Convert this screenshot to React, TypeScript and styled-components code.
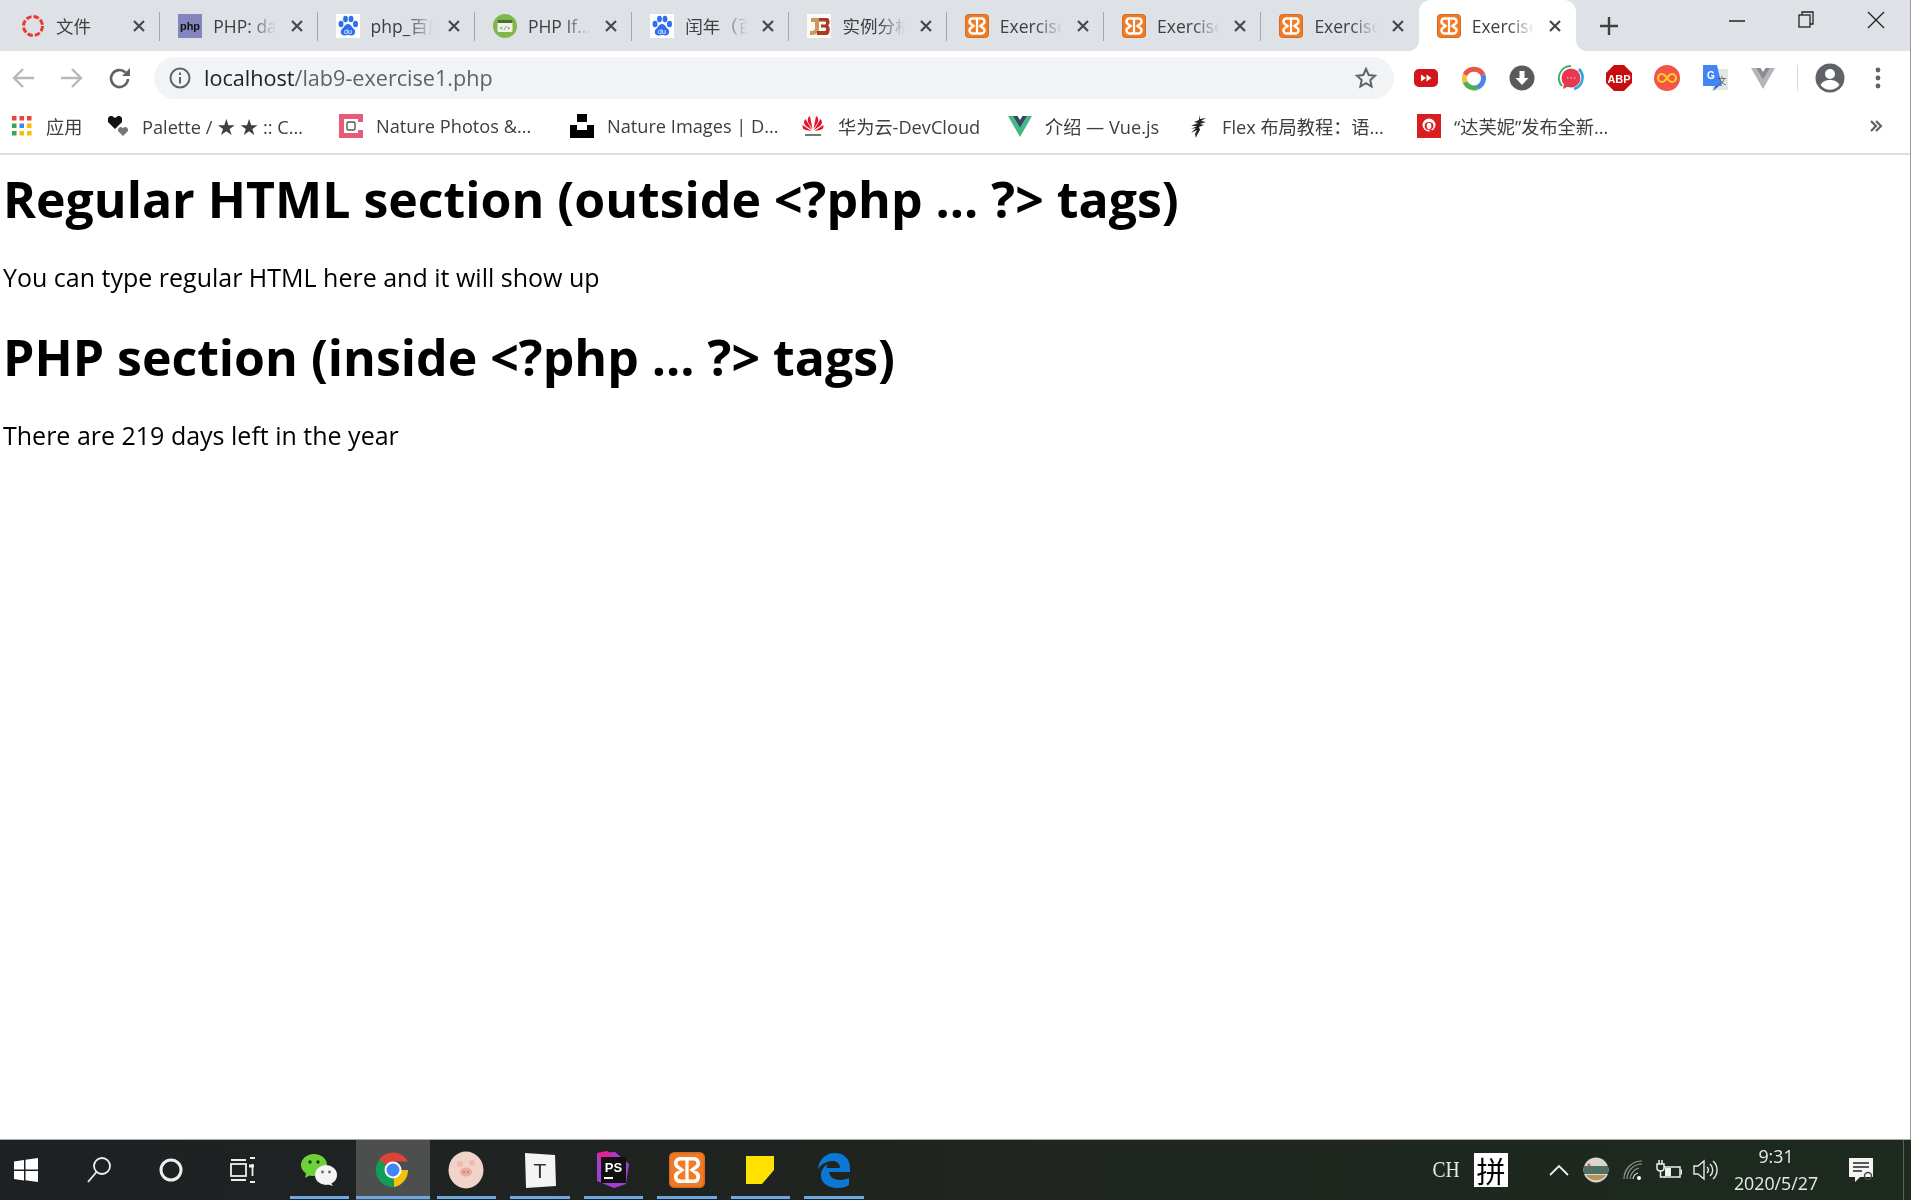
import React from "react";
import styled, { createGlobalStyle } from "styled-components";

const GlobalStyle = createGlobalStyle`
  html, body {
    margin: 0;
    padding: 0;
    background: #fff;
    overflow: hidden;
  }
  * { box-sizing: border-box; }
`;

const UI_FONT = `"Open Sans", "Noto Sans", "Noto Sans CJK SC", sans-serif`;

const Screen = styled.div`
  width: 1911px;
  height: 1200px;
  display: flex;
  flex-direction: column;
  font-family: ${UI_FONT};
  overflow: hidden;
  background: #fff;
  filter: blur(0.35px);
`;

const BrowserWindow = styled.div`
  flex: 1;
  min-height: 0;
  display: flex;
  flex-direction: column;
  border-right: 1px solid #9c9c9c;
`;

const TabStrip = styled.div`
  height: 51px;
  flex: none;
  display: flex;
  align-items: stretch;
  padding-left: 3px;
  background: #dee1e6;
`;

const Tab = styled.div<{ $active?: boolean; $noSep?: boolean }>`
  width: 157.3px;
  flex: none;
  position: relative;
  display: flex;
  align-items: center;
  padding: 0 14px 0 18px;
  gap: 11px;
  border-radius: 12px 12px 0 0;
  background: ${(p) => (p.$active ? "#fff" : "transparent")};

  &::after {
    content: "";
    display: ${(p) => (p.$noSep || p.$active ? "none" : "block")};
    position: absolute;
    right: 0;
    top: 12px;
    height: 29px;
    width: 1px;
    background: #a4a7ab;
  }
  &::before {
    content: "";
    display: ${(p) => (p.$active ? "block" : "none")};
    position: absolute;
    left: -10px;
    right: -10px;
    bottom: 0;
    height: 10px;
    z-index: 0;
    background:
      radial-gradient(circle at 0 0, #dee1e6 9.5px, #fff 10px) left bottom / 10px 10px no-repeat,
      radial-gradient(circle at 100% 0, #dee1e6 9.5px, #fff 10px) right bottom / 10px 10px no-repeat;
  }
  & > * { position: relative; z-index: 1; }
`;

const TabTitle = styled.span`
  flex: 1;
  min-width: 0;
  white-space: nowrap;
  overflow: hidden;
  font-size: 17.5px;
  color: #3c4043;
  mask-image: linear-gradient(90deg, #000 55%, transparent 96%);
`;

const TabClose = styled.svg`
  flex: none;
  width: 14px;
  height: 14px;
`;

const NewTab = styled.svg`
  flex: none;
  width: 20px;
  height: 20px;
  margin: 0 0 0 23px;
  align-self: center;
`;

const WindowControls = styled.div`
  margin-left: auto;
  display: flex;
  align-items: flex-start;
  padding: 9px 25px 0 0;
  gap: 53px;
`;

const ToolBar = styled.div`
  height: 53px;
  flex: none;
  display: flex;
  align-items: center;
  padding: 0 0 0 12px;
`;

const NavButton = styled.div<{ $width: number }>`
  width: ${(p) => p.$width}px;
  flex: none;
  display: flex;
  align-items: center;
`;

const AddressBar = styled.div`
  width: 1240px;
  height: 42px;
  flex: none;
  display: flex;
  align-items: center;
  margin-left: 1px;
  padding: 0 16px 0 15px;
  border-radius: 21px;
  background: #f1f3f4;
`;

const Url = styled.div`
  flex: 1;
  margin-left: 13px;
  font-size: 21.6px;
  color: #5f6368;
  white-space: nowrap;
  b {
    font-weight: 400;
    color: #202124;
  }
`;

const Extensions = styled.div`
  display: flex;
  align-items: center;
  margin-left: 8px;
`;

const ExtSlot = styled.div<{ $width?: number }>`
  width: ${(p) => p.$width ?? 48.2}px;
  flex: none;
  display: flex;
  justify-content: center;
  align-items: center;
`;

const ToolDivider = styled.div`
  width: 1px;
  height: 26px;
  flex: none;
  margin: 0 0 0 9px;
  background: #d7d9dc;
`;

const BookmarkBar = styled.div`
  height: 51px;
  flex: none;
  display: flex;
  align-items: center;
  padding: 0 27px 5px 11px;
  border-bottom: 2px solid #dcdde1;
`;

const Bookmark = styled.div<{ $width: number }>`
  width: ${(p) => p.$width}px;
  flex: none;
  display: flex;
  align-items: center;
  gap: 13px;
  font-size: 18.2px;
  color: #3c4043;
  white-space: nowrap;
`;

const BookmarkMore = styled.svg`
  margin-left: auto;
  width: 14px;
  height: 14px;
`;

const Page = styled.main`
  flex: 1;
  min-height: 0;
  padding: 0 0 0 3px;
  color: #000;
`;

const Heading = styled.h1`
  margin: 0;
  font-size: 50px;
  line-height: 60px;
  font-weight: 700;
  white-space: nowrap;
`;

const FirstHeading = styled(Heading)`
  margin-top: 14px;
`;

const Lead = styled.p`
  margin: 32px 0 34px;
  font-size: 25px;
  line-height: 32px;
  white-space: nowrap;
`;

const Taskbar = styled.footer`
  height: 61px;
  flex: none;
  display: flex;
  align-items: stretch;
  border-top: 1px solid #a8a8a8;
  background: linear-gradient(90deg, #1d2124 0%, #20241f 45%, #1d2a1f 100%);
  color: #eef0ee;
`;

const StartButton = styled.div`
  width: 63px;
  flex: none;
  display: flex;
  align-items: center;
  padding-left: 13px;
`;

const SystemButton = styled.div`
  width: 72px;
  flex: none;
  display: flex;
  align-items: center;
  justify-content: center;
`;

const AppButtons = styled.div`
  display: flex;
  align-items: stretch;
  margin-left: 3.5px;
`;

const AppButton = styled.div<{ $active?: boolean }>`
  width: 73.5px;
  flex: none;
  display: flex;
  align-items: center;
  justify-content: center;
  position: relative;
  background: ${(p) => (p.$active ? "#4c4f4d" : "transparent")};

  &::after {
    content: "";
    position: absolute;
    left: ${(p) => (p.$active ? "0" : "7px")};
    right: ${(p) => (p.$active ? "0" : "7px")};
    bottom: 1px;
    height: 3px;
    background: #6aa9e4;
  }
`;

const Tray = styled.div`
  margin-left: auto;
  display: flex;
  align-items: center;
  padding-right: 7px;
`;

const ImeLang = styled.span`
  width: 32px;
  margin-right: 12px;
  text-align: center;
  font-family: "Liberation Serif", serif;
  font-size: 23px;
  transform: scaleX(0.85);
  color: #e8e8e2;
`;

const ImeMode = styled.span`
  width: 34px;
  height: 34px;
  margin-right: 33px;
  display: flex;
  align-items: center;
  justify-content: center;
  background: #fff;
  color: #000;
  font-family: "Noto Sans CJK SC", sans-serif;
  font-size: 29px;
  line-height: 34px;
`;

const TrayIcon = styled.div<{ $width: number }>`
  width: ${(p) => p.$width}px;
  flex: none;
  display: flex;
  align-items: center;
  justify-content: center;
`;

const Clock = styled.div`
  width: 100px;
  margin-right: 12px;
  text-align: center;
  font-size: 17.8px;
  line-height: 27px;
  color: #e9ebe9;
`;

const ShowDesktop = styled.div`
  width: 1px;
  align-self: stretch;
  margin-left: 19px;
  background: #596059;
`;

/* favicons */

const Ring = () => (
  <svg width="24" height="24" viewBox="0 0 24 24">
    <circle cx="12" cy="12" r="9.5" fill="none" stroke="#ea3a2e" strokeWidth="3" strokeDasharray="5.5 2" />
  </svg>
);

const PhpIcon = () => (
  <svg width="24" height="24" viewBox="0 0 24 24">
    <rect width="24" height="24" fill="#8585bd" />
    <text x="12" y="16" textAnchor="middle" fontFamily="Liberation Sans, sans-serif" fontWeight="700" fontSize="11" fill="#111">php</text>
  </svg>
);

const Paw = () => (
  <svg width="24" height="24" viewBox="0 0 24 24">
    <rect width="24" height="24" fill="#fff" />
    <g fill="#2f6fee">
      <ellipse cx="5" cy="10" rx="2.5" ry="3.2" />
      <ellipse cx="9.5" cy="5" rx="2.4" ry="3.2" />
      <ellipse cx="15" cy="5" rx="2.4" ry="3.2" />
      <ellipse cx="19.5" cy="10" rx="2.5" ry="3.2" />
      <path d="M12 10c3 0 3.5 3 6 5 2.5 2.400 1 7-3 6.500-1.500-.2-2-.5-3-.5s-1.500.3-3 .5c-4 .5-5.500-4-3-6.500 2.500-2 3-5 6-5z" />
    </g>
    <text x="12" y="20" textAnchor="middle" fontFamily="Liberation Sans, sans-serif" fontSize="7" fill="#fff">du</text>
  </svg>
);

const GreenCode = () => (
  <svg width="24" height="24" viewBox="0 0 24 24">
    <circle cx="12" cy="12" r="12" fill="#7fb84a" />
    <rect x="4.500" y="6" width="15" height="12" rx="1.500" fill="#eef3e6" />
    <rect x="4.500" y="6" width="15" height="3" fill="#4f6a3a" />
    <text x="12" y="16" textAnchor="middle" fontFamily="Liberation Mono, monospace" fontSize="6" fill="#44543a">{"</>"}</text>
  </svg>
);

const JbIcon = () => (
  <svg width="24" height="24" viewBox="0 0 24 24">
    <rect width="24" height="24" fill="#fdfaf6" />
    <path d="M4 4h8v11c0 4-3 6-9 6v-4c3 0 5-.5 5-2.500V8H4z" fill="#c79a5e" />
    <path d="M12 4h8c3 0 3.500 6 1 7.500 3 1.500 2 9.500-1.500 9.500H10v-4h8c1.500 0 1.500-3.500 0-3.500h-4v-3h4c1.500 0 1.500-3 0-3h-6z" fill="#a83a26" />
  </svg>
);

const Xampp = ({ size = 24 }: { size?: number }) => (
  <svg width={size} height={size} viewBox="0 0 24 24">
    <rect x=".5" y=".5" width="23" height="23" rx="3" fill="#f27a22" stroke="#d26a28" />
    <path
      d="M7.500 4.500h9a3 3 0 0 1 1.500 5.600L15.500 12l2.500 1.900a3 3 0 0 1-1.500 5.600h-9A3 3 0 0 1 6 13.900L8.500 12 6 10.100A3 3 0 0 1 7.500 4.500z"
      fill="none"
      stroke="#fff"
      strokeWidth="2.400"
    />
    <path d="M12 5v14" stroke="#fff" strokeWidth="2.200" />
  </svg>
);

/* bookmarks */

const AppsGrid = () => {
  const colors = ["#ea4335", "#ea4335", "#ea4335", "#34a853", "#4285f4", "#fbbc05", "#34a853", "#fbbc05", "#fbbc05"];
  return (
    <svg width="22" height="22" viewBox="0 0 22 22">
      {colors.map((c, i) => (
        <rect key={i} x={1 + (i % 3) * 7.500} y={1 + Math.floor(i / 3) * 7.500} width="4.500" height="4.500" fill={c} />
      ))}
    </svg>
  );
};

const Hearts = () => (
  <svg width="22" height="22" viewBox="0 0 22 22">
    <path d="M8 14 1 7V3l2-2h2l3 2 3-2h2l2 2v4z" fill="#111" />
    <path d="M16 21l-5-5v-2l2-2h1l2 1 2-1h1l2 2v2z" fill="#777" />
  </svg>
);

const NatureIcon = () => (
  <svg width="24" height="24" viewBox="0 0 24 24">
    <path d="M0 0h24v8h-5V5H5v14h14v-3h5v8H0z" fill="#e85a75" />
    <rect x="8" y="8" width="8" height="8" rx="1.500" fill="none" stroke="#555" strokeWidth="1.400" />
  </svg>
);

const UnsplashIcon = () => (
  <svg width="24" height="26" viewBox="0 0 24 26">
    <path d="M7 1h10v8H7zM0 12h7v5h10v-5h7v13H0z" fill="#000" />
  </svg>
);

const HuaweiIcon = () => (
  <svg width="24" height="24" viewBox="0 0 24 24">
    <g fill="#e3152a">
      <path d="M11.500 15 9 2c-2 1-3 4-1.500 7z" />
      <path d="M12.500 15 15 2c2 1 3 4 1.500 7z" />
      <path d="M11 16 4.500 5C2.500 7 2.500 10 5 12z" />
      <path d="M13 16l6.500-11c2 2 2 5-.5 7z" />
      <path d="M10.500 17 1.500 11c-.5 2.500 1 4.500 3 5z" />
      <path d="M13.500 17l9-6c.5 2.500-1 4.500-3 5z" />
    </g>
    <rect x="4" y="20" width="16" height="2" fill="#777" />
  </svg>
);

const VueIcon = ({ faded }: { faded?: boolean }) => (
  <svg width="24" height="22" viewBox="0 0 24 22">
    <path d="M0 1h5l7 12L19 1h5L12 22z" fill={faded ? "#b3b5b8" : "#42b883"} />
    <path d="M5 1h4.500L12 5l2.500-4H19l-7 12z" fill={faded ? "#8a8c90" : "#35495e"} />
  </svg>
);

const Brush = () => (
  <svg width="22" height="24" viewBox="0 0 22 24">
    <path
      d="M12 1l1 4 6-1-5 3 5 1-6 2 4 1-5 2 1 3-3 5-1 3-1-4 2-4-6 3 5-5-5 1 6-3-6 0 7-3-4-1 5-2z"
      fill="#222"
    />
  </svg>
);

const QIcon = () => (
  <svg width="24" height="24" viewBox="0 0 24 24">
    <rect width="24" height="24" fill="#d81e1e" />
    <circle cx="12" cy="11" r="6.500" fill="#fff" />
    <text x="12" y="16" textAnchor="middle" fontFamily="Liberation Serif, serif" fontWeight="700" fontSize="13" fill="#d81e1e">Q</text>
  </svg>
);

/* extensions */

const YoutubeFast = () => (
  <svg width="26" height="22" viewBox="0 0 26 22">
    <rect x="1" y="2" width="24" height="18" rx="5" fill="#d3161b" />
    <path d="M8 7.500l5 3.500-5 3.500zM13.500 7.500l5 3.500-5 3.500z" fill="#fff" />
  </svg>
);

const ChromeRing = () => (
  <svg width="26" height="26" viewBox="0 0 26 26" fill="none" strokeWidth="5">
    <path d="M4 10A10 10 0 0 1 22 10" stroke="#e8554a" />
    <path d="M22 10a10 10 0 0 1-6 12.500" stroke="#4a86e8" />
    <path d="M16 22.500A10 10 0 0 1 4 17" stroke="#4caf50" />
    <path d="M4 17a10 10 0 0 1 0-7" stroke="#fbc02d" />
  </svg>
);

const DownloadDisc = () => (
  <svg width="26" height="26" viewBox="0 0 26 26">
    <circle cx="13" cy="13" r="12.500" fill="#5a5a5a" />
    <path d="M10.500 6h5v7h4L13 20l-6.500-7h4z" fill="#fff" />
  </svg>
);

const ChatDisc = () => (
  <svg width="26" height="26" viewBox="0 0 26 26">
    <path d="M13 1a12 12 0 0 0-9 20" fill="none" stroke="#3bb273" strokeWidth="2" />
    <path d="M16 24a12 12 0 0 0 5-20" fill="none" stroke="#2aa5e0" strokeWidth="2.500" />
    <circle cx="13" cy="13" r="9.500" fill="#e8384f" />
    <path d="M6 19l-1 5 6-3z" fill="#e8384f" />
    <path d="M9 13h1.500M12.500 13H14M16 13h1.500" stroke="#ffd0d6" strokeWidth="1.200" />
  </svg>
);

const AbpSign = () => (
  <svg width="26" height="26" viewBox="0 0 26 26">
    <path d="M8 0h10l8 8v10l-8 8H8l-8-8V8z" fill="#c70d0d" />
    <text x="13" y="17.500" textAnchor="middle" fontFamily="Liberation Sans, sans-serif" fontWeight="700" fontSize="11" fill="#fff">ABP</text>
  </svg>
);

const Infinity8 = () => (
  <svg width="26" height="26" viewBox="0 0 26 26">
    <circle cx="13" cy="13" r="13" fill="#f4544c" />
    <path d="M13 13c-2-3-3-4-5-4a4 4 0 0 0 0 8c2 0 3-1 5-4s3-4 5-4a4 4 0 0 1 0 8c-2 0-3-1-5-4z" fill="none" stroke="#ffd11a" strokeWidth="2.200" />
  </svg>
);

const TranslateIcon = () => (
  <svg width="26" height="28" viewBox="0 0 26 28">
    <rect x="10" y="5" width="16" height="21" fill="#e4e6e4" />
    <path d="M1 1h14l5 21H1z" fill="#4285f4" />
    <path d="M13 22l-2 5 6-5z" fill="#3367c4" />
    <text x="9" y="15" textAnchor="middle" fontFamily="Liberation Sans, sans-serif" fontWeight="700" fontSize="10" fill="#fff">G</text>
    <text x="20" y="20" textAnchor="middle" fontFamily="Noto Sans CJK SC, sans-serif" fontSize="9" fill="#555">文</text>
  </svg>
);

const ProfileIcon = () => (
  <svg width="30" height="30" viewBox="0 0 30 30">
    <circle cx="15" cy="15" r="14.500" fill="#5f6368" />
    <circle cx="15" cy="11" r="5" fill="#fff" />
    <path d="M5.500 22c2-4 6-5 9.500-5s7.500 1 9.500 5a12 12 0 0 1-19 0z" fill="#fff" />
  </svg>
);

/* taskbar */

const WinLogo = () => (
  <svg width="26" height="26" viewBox="0 0 26 26" fill="#fff">
    <path d="M1 4.500l10-1.500v9.500H1zM12.500 2.800L25 1v11.500H12.500zM1 14h10v9.500L1 22zM12.500 14H25v11l-12.500-1.800z" />
  </svg>
);

const SearchGlass = () => (
  <svg width="26" height="28" viewBox="0 0 26 28" fill="none" stroke="#eee" strokeWidth="1.800">
    <circle cx="16" cy="10" r="8" />
    <path d="M10.500 16L2 26" />
  </svg>
);

const Cortana = () => (
  <svg width="26" height="26" viewBox="0 0 26 26">
    <circle cx="13" cy="13" r="10" fill="none" stroke="#eee" strokeWidth="3" />
  </svg>
);

const TaskView = () => (
  <svg width="26" height="26" viewBox="0 0 26 26" fill="none" stroke="#eee" strokeWidth="1.800">
    <rect x="1" y="7" width="15" height="12" />
    <path d="M1 3h15M1 23h15M20 1h5M20 25h5M22.500 7v12" />
    <path d="M19 9h5" strokeWidth="3" />
  </svg>
);

const WeChat = () => (
  <svg width="38" height="34" viewBox="0 0 38 34">
    <path d="M14 1c7.500 0 13 5 13 11s-5.500 11-13 11c-1.500 0-3-.2-4.300-.6L5 25l1-4.500C3 18.500 1 15.500 1 12 1 6 6.500 1 14 1z" fill="#6fd13a" />
    <ellipse cx="26" cy="22" rx="11" ry="10" fill="#f4f4f4" />
    <path d="M31 30l2 3-6-2z" fill="#f4f4f4" />
    <circle cx="10" cy="9" r="1.700" fill="#1c3a10" />
    <circle cx="18" cy="9" r="1.700" fill="#1c3a10" />
    <circle cx="22.500" cy="19" r="1.400" fill="#666" />
    <circle cx="29.500" cy="19" r="1.400" fill="#666" />
  </svg>
);

const ChromeLogo = () => (
  <svg width="36" height="36" viewBox="0 0 36 36">
    <path d="M18 18L4 8A17 17 0 0 1 33 9.500H18z" fill="#db4437" />
    <path d="M18 18h15a17 17 0 0 1-14 17z" fill="#f4c20d" />
    <path d="M18 18L19 35A17 17 0 0 1 4 8z" fill="#0f9d58" />
    <circle cx="18" cy="18" r="8.500" fill="#fff" />
    <circle cx="18" cy="18" r="6.500" fill="#4285f4" />
  </svg>
);

const PigAvatar = () => (
  <svg width="36" height="38" viewBox="0 0 36 38">
    <ellipse cx="18" cy="19" rx="17.500" ry="18.500" fill="#f0d3c9" />
    <circle cx="12" cy="13" r="3" fill="#f3b8ad" />
    <circle cx="24" cy="12" r="3" fill="#f3b8ad" />
    <ellipse cx="18" cy="21" rx="6" ry="4.500" fill="#eeaaa0" />
    <circle cx="16" cy="21" r="1" fill="#b77" />
    <circle cx="20" cy="21" r="1" fill="#b77" />
  </svg>
);

const TyporaIcon = () => (
  <svg width="34" height="36" viewBox="0 0 34 36">
    <path d="M2 1l30 2 1 31-30 2z" fill="#f4f4f2" />
    <text x="17" y="26" textAnchor="middle" fontFamily="Liberation Sans, sans-serif" fontSize="21" fill="#333">T</text>
  </svg>
);

const PhpStorm = () => (
  <svg width="36" height="38" viewBox="0 0 36 38">
    <path d="M2 2l18-1 14 12-3 20-12 4L2 30z" fill="#a33fd6" />
    <path d="M2 2l10-2 8 6-14 6z" fill="#e2249b" />
    <rect x="6" y="6" width="25" height="26" fill="#111" />
    <text x="18.500" y="21" textAnchor="middle" fontFamily="Liberation Sans, sans-serif" fontWeight="700" fontSize="13" fill="#fff">PS</text>
    <rect x="9" y="26" width="9" height="2" fill="#fff" />
  </svg>
);

const StickyNote = () => (
  <svg width="30" height="30" viewBox="0 0 30 30">
    <path d="M1 1h28v28H1z" fill="#ffe100" />
    <path d="M29 15L17 29h12z" fill="#222" />
    <path d="M17 18h9L17 28z" fill="#ffe100" />
  </svg>
);

const EdgeLogo = () => (
  <svg width="34" height="36" viewBox="0 0 34 36">
    <path
      d="M1 17C2 7 9 1 18 1c9 0 15 6 15 15v4H12c.5 5 5 8 11 8 3 0 6-1 9-2v7c-3 2-7 3-11 3C10 36 3 30 4 22c.5-4 3-8 7-10-1 2-1.500 3-1.500 4H23c0-4-3-7-7-7-6 0-12 3-15 8z"
      fill="#0a78d4"
    />
  </svg>
);

const TrayAvatar = () => (
  <svg width="26" height="26" viewBox="0 0 26 26">
    <circle cx="13" cy="13" r="12.500" fill="#d9d6cf" />
    <rect x="1" y="9" width="24" height="8" fill="#4f6f62" />
    <path d="M3 18h20a12 12 0 0 1-20 0z" fill="#b8925c" />
    <circle cx="6" cy="8" r="1.500" fill="#e2447a" />
  </svg>
);

const WifiIcon = () => (
  <svg width="22" height="24" viewBox="0 0 22 24" fill="none" stroke="#cfd2cf" strokeWidth="1.200">
    <path d="M2 21a18 18 0 0 1 18-18M5 21a15 15 0 0 1 15-15M8 21a12 12 0 0 1 9-11" opacity=".65" />
    <path d="M11 21a7 7 0 0 1 5-6" />
    <circle cx="17" cy="20" r="2" fill="#fff" stroke="none" />
  </svg>
);

const BatteryIcon = () => (
  <svg width="26" height="22" viewBox="0 0 26 22" fill="none" stroke="#f0f0f0" strokeWidth="1.500">
    <path d="M8 8h16v10H8" />
    <path d="M25.500 10.500v5" />
    <rect x="9" y="9" width="6" height="8" fill="#f0f0f0" stroke="none" />
    <path d="M1 5h7v4c0 2-1.500 3-3.500 3S1 11 1 9zM3 1v4M6 1v4M4.500 12v6H9" fill="#1f2a20" />
  </svg>
);

const SpeakerIcon = () => (
  <svg width="26" height="24" viewBox="0 0 26 24" fill="none" stroke="#e8e8e8" strokeWidth="1.400">
    <path d="M1 8h4l6-5v18l-6-5H1z" />
    <path d="M14 9a4 4 0 0 1 0 6M17 6a8 8 0 0 1 0 12M20 3a12 12 0 0 1 0 18" />
  </svg>
);

const NotifyIcon = () => (
  <svg width="26" height="26" viewBox="0 0 26 26">
    <path d="M1 1h24v19H12l-5 5v-5H1z" fill="#f4f4f4" />
    <path d="M5 6h16M5 10h16M5 14h9" stroke="#222" strokeWidth="1.500" />
    <circle cx="20" cy="19" r="3.500" fill="none" stroke="#444" strokeWidth="1.500" />
  </svg>
);

const tabs: { title: string; icon: React.ReactNode }[] = [
  { title: "文件", icon: <Ring /> },
  { title: "PHP: date - Manual", icon: <PhpIcon /> },
  { title: "php_百度百科", icon: <Paw /> },
  { title: "PHP If...", icon: <GreenCode /> },
  { title: "闰年（百度百科）", icon: <Paw /> },
  { title: "实例分析", icon: <JbIcon /> },
  { title: "Exercise", icon: <Xampp /> },
  { title: "Exercise", icon: <Xampp /> },
  { title: "Exercise", icon: <Xampp /> },
  { title: "Exercise", icon: <Xampp /> },
];

const bookmarks: { label: string; width: number; icon: React.ReactNode }[] = [
  { label: "应用", width: 96, icon: <AppsGrid /> },
  { label: "Palette / ★ ★ :: C...", width: 232, icon: <Hearts /> },
  { label: "Nature Photos &...", width: 231, icon: <NatureIcon /> },
  { label: "Nature Images | D...", width: 231, icon: <UnsplashIcon /> },
  { label: "华为云-DevCloud", width: 207, icon: <HuaweiIcon /> },
  { label: "介绍 — Vue.js", width: 179, icon: <VueIcon /> },
  { label: "Flex 布局教程：语...", width: 230, icon: <Brush /> },
  { label: "“达芙妮”发布全新...", width: 200, icon: <QIcon /> },
];

const extensions = [
  <YoutubeFast key="yt" />,
  <ChromeRing key="ring" />,
  <DownloadDisc key="dl" />,
  <ChatDisc key="chat" />,
  <AbpSign key="abp" />,
  <Infinity8 key="inf" />,
  <TranslateIcon key="tr" />,
  <VueIcon key="vue" faded />,
];

const taskApps = [
  <WeChat key="wechat" />,
  <ChromeLogo key="chrome" />,
  <PigAvatar key="pig" />,
  <TyporaIcon key="typora" />,
  <PhpStorm key="ps" />,
  <Xampp key="xampp" size={36} />,
  <StickyNote key="note" />,
  <EdgeLogo key="edge" />,
];

export default function App() {
  return (
    <Screen>
      <GlobalStyle />
      <BrowserWindow>
        <TabStrip>
          {tabs.map((tab, i) => (
            <Tab key={i} $active={i === tabs.length - 1} $noSep={i === tabs.length - 2}>
              {tab.icon}
              <TabTitle>{tab.title}</TabTitle>
              <TabClose viewBox="0 0 14 14">
                <path d="M2 2l10 10M12 2L2 12" stroke="#45484c" strokeWidth="2.200" />
              </TabClose>
            </Tab>
          ))}
          <NewTab viewBox="0 0 20 20">
            <path d="M10 1v18M1 10h18" stroke="#3c4043" strokeWidth="2.400" />
          </NewTab>
          <WindowControls>
            <svg width="16" height="24" viewBox="0 0 16 24">
              <path d="M0 12h16" stroke="#222" strokeWidth="1.500" />
            </svg>
            <svg width="16" height="24" viewBox="0 0 16 24" fill="none" stroke="#222" strokeWidth="1.300">
              <rect x="1" y="6" width="11" height="12" />
              <path d="M4 6V3h11v12h-3" />
            </svg>
            <svg width="18" height="24" viewBox="0 0 18 24">
              <path d="M1 3l16 16M17 3L1 19" stroke="#222" strokeWidth="1.300" />
            </svg>
          </WindowControls>
        </TabStrip>

        <ToolBar>
          <NavButton $width={47}>
            <svg width="24" height="24" viewBox="0 0 24 24" fill="none" stroke="#b6b8bb" strokeWidth="2.400">
              <path d="M22 12H3M11 3l-9 9 9 9" />
            </svg>
          </NavButton>
          <NavButton $width={49}>
            <svg width="24" height="24" viewBox="0 0 24 24" fill="none" stroke="#b6b8bb" strokeWidth="2.400">
              <path d="M2 12h19M13 3l9 9-9 9" />
            </svg>
          </NavButton>
          <NavButton $width={45}>
            <svg width="24" height="24" viewBox="0 0 24 24" fill="none" stroke="#5f6368" strokeWidth="2.600">
              <path d="M20 13a8.500 8.500 0 1 1-2.500-6.500" />
              <path d="M22 2v8h-8z" fill="#5f6368" stroke="none" />
            </svg>
          </NavButton>
          <AddressBar>
            <svg width="22" height="22" viewBox="0 0 22 22" fill="none" stroke="#5f6368" strokeWidth="2">
              <circle cx="11" cy="11" r="9.500" />
              <path d="M11 10v6.500M11 5.500v2.500" />
            </svg>
            <Url>
              <b>localhost</b>/lab9-exercise1.php
            </Url>
            <svg width="24" height="24" viewBox="0 0 24 24" fill="none" stroke="#5f6368" strokeWidth="2">
              <path d="M12 3l2.700 6 6.300.7-4.700 4.300 1.300 6.500L12 17.200 6.400 20.500 7.700 14 3 9.700 9.300 9z" />
            </svg>
          </AddressBar>
          <Extensions>
            {extensions.map((icon) => (
              <ExtSlot key={icon.key}>{icon}</ExtSlot>
            ))}
          </Extensions>
          <ToolDivider />
          <ExtSlot $width={64}>
            <ProfileIcon />
          </ExtSlot>
          <ExtSlot $width={32}>
            <svg width="6" height="24" viewBox="0 0 6 24" fill="#5f6368">
              <circle cx="3" cy="4" r="2.400" />
              <circle cx="3" cy="12" r="2.400" />
              <circle cx="3" cy="20" r="2.400" />
            </svg>
          </ExtSlot>
        </ToolBar>

        <BookmarkBar>
          {bookmarks.map((b) => (
            <Bookmark key={b.label} $width={b.width}>
              {b.icon}
              <span>{b.label}</span>
            </Bookmark>
          ))}
          <BookmarkMore viewBox="0 0 14 14">
            <path d="M2 2l5 5-5 5M7 2l5 5-5 5" fill="none" stroke="#5f6368" strokeWidth="2.200" />
          </BookmarkMore>
        </BookmarkBar>

        <Page>
          <FirstHeading>Regular HTML section (outside &lt;?php ... ?&gt; tags)</FirstHeading>
          <Lead>You can type regular HTML here and it will show up</Lead>
          <Heading>PHP section (inside &lt;?php ... ?&gt; tags)</Heading>
          <Lead>There are 219 days left in the year</Lead>
        </Page>
      </BrowserWindow>

      <Taskbar>
        <StartButton>
          <WinLogo />
        </StartButton>
        <SystemButton>
          <SearchGlass />
        </SystemButton>
        <SystemButton>
          <Cortana />
        </SystemButton>
        <SystemButton>
          <TaskView />
        </SystemButton>
        <AppButtons>
          {taskApps.map((icon, i) => (
            <AppButton key={icon.key} $active={i === 1}>
              {icon}
            </AppButton>
          ))}
        </AppButtons>
        <Tray>
          <ImeLang>CH</ImeLang>
          <ImeMode>拼</ImeMode>
          <TrayIcon $width={36}>
            <svg width="20" height="12" viewBox="0 0 20 12" fill="none" stroke="#eee" strokeWidth="1.800">
              <path d="M1 11l9-9 9 9" />
            </svg>
          </TrayIcon>
          <TrayIcon $width={38}>
            <TrayAvatar />
          </TrayIcon>
          <TrayIcon $width={36}>
            <WifiIcon />
          </TrayIcon>
          <TrayIcon $width={35}>
            <BatteryIcon />
          </TrayIcon>
          <TrayIcon $width={40}>
            <SpeakerIcon />
          </TrayIcon>
          <Clock>
            9:31
            <br />
            2020/5/27
          </Clock>
          <TrayIcon $width={46}>
            <NotifyIcon />
          </TrayIcon>
          <ShowDesktop />
        </Tray>
      </Taskbar>
    </Screen>
  );
}
